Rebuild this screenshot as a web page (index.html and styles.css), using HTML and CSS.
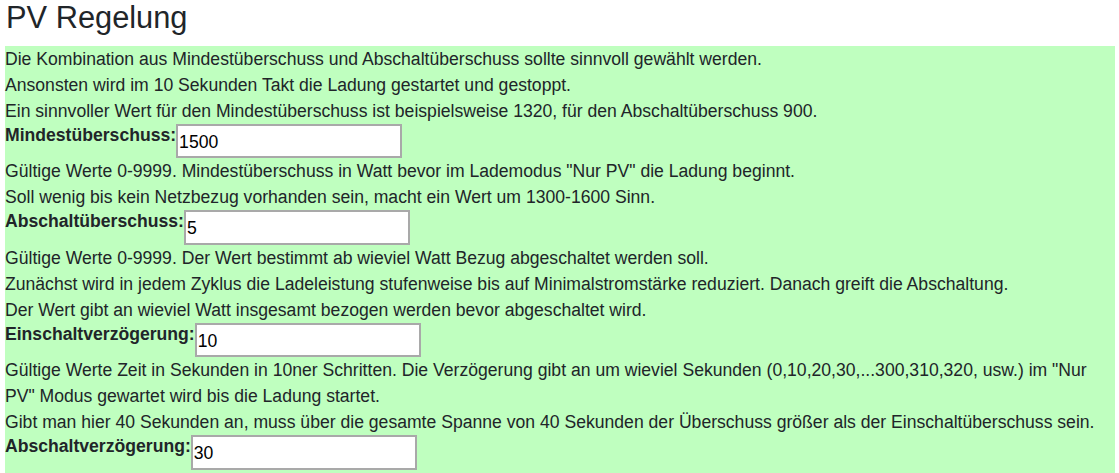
FILE: index.html
```html
<!DOCTYPE html>
<html lang="de">
<head>
<meta charset="utf-8">
<title>PV Regelung</title>
<link rel="stylesheet" href="styles.css">
</head>
<body>
<h3 class="title">PV Regelung</h3>
<div class="panel">
  <div class="line">Die Kombination aus Mindestüberschuss und Abschaltüberschuss sollte sinnvoll gewählt werden.</div>
  <div class="line">Ansonsten wird im 10 Sekunden Takt die Ladung gestartet und gestoppt.</div>
  <div class="line">Ein sinnvoller Wert für den Mindestüberschuss ist beispielsweise 1320, für den Abschaltüberschuss 900.</div>
  <div class="field">
    <label class="label" for="mind">Mindestüberschuss:</label>
    <input class="input" id="mind" type="text" value="1500">
  </div>
  <div class="line">Gültige Werte 0-9999. Mindestüberschuss in Watt bevor im Lademodus "Nur PV" die Ladung beginnt.</div>
  <div class="line">Soll wenig bis kein Netzbezug vorhanden sein, macht ein Wert um 1300-1600 Sinn.</div>
  <div class="field">
    <label class="label" for="absu">Abschaltüberschuss:</label>
    <input class="input" id="absu" type="text" value="5">
  </div>
  <div class="line">Gültige Werte 0-9999. Der Wert bestimmt ab wieviel Watt Bezug abgeschaltet werden soll.</div>
  <div class="line">Zunächst wird in jedem Zyklus die Ladeleistung stufenweise bis auf Minimalstromstärke reduziert. Danach greift die Abschaltung.</div>
  <div class="line">Der Wert gibt an wieviel Watt insgesamt bezogen werden bevor abgeschaltet wird.</div>
  <div class="field">
    <label class="label" for="einv">Einschaltverzögerung:</label>
    <input class="input" id="einv" type="text" value="10">
  </div>
  <div class="line">Gültige Werte Zeit in Sekunden in 10ner Schritten. Die Verzögerung gibt an um wieviel Sekunden (0,10,20,30,...300,310,320, usw.) im "Nur PV" Modus gewartet wird bis die Ladung startet.</div>
  <div class="line">Gibt man hier 40 Sekunden an, muss über die gesamte Spanne von 40 Sekunden der Überschuss größer als der Einschaltüberschuss sein.</div>
  <div class="field">
    <label class="label" for="absv">Abschaltverzögerung:</label>
    <input class="input" id="absv" type="text" value="30">
  </div>
</div>
</body>
</html>
```
FILE: styles.css
```css
html, body {
  margin: 0;
  padding: 0;
}
body {
  padding: 0 4px 0 5px;
  font-family: "Liberation Sans", Arial, sans-serif;
  font-size: 17.6px;
  line-height: 26px;
  color: #212529;
  background: #ffffff;
}
.title {
  margin: 0 0 8.8px 0;
  padding-left: 1px;
  font-size: 30.8px;
  font-weight: 400;
  line-height: 1.2;
  color: #212529;
}
.panel {
  background: #bfffbf;
  padding: 0 0 4px 0;
}
.line {
  margin: 0;
}
.field {
  display: flex;
  align-items: flex-start;
}
.label {
  font-weight: 700;
  line-height: 1.3;
}
.input {
  box-sizing: border-box;
  width: 226px;
  height: 34.5px;
  margin: 0;
  padding: 2px 1px 0 1px;
  border: 2px solid #a9a9a9;
  border-radius: 0;
  background: #ffffff;
  font-family: "Liberation Sans", Arial, sans-serif;
  font-size: 17.6px;
  color: #000000;
  outline: none;
}
```
